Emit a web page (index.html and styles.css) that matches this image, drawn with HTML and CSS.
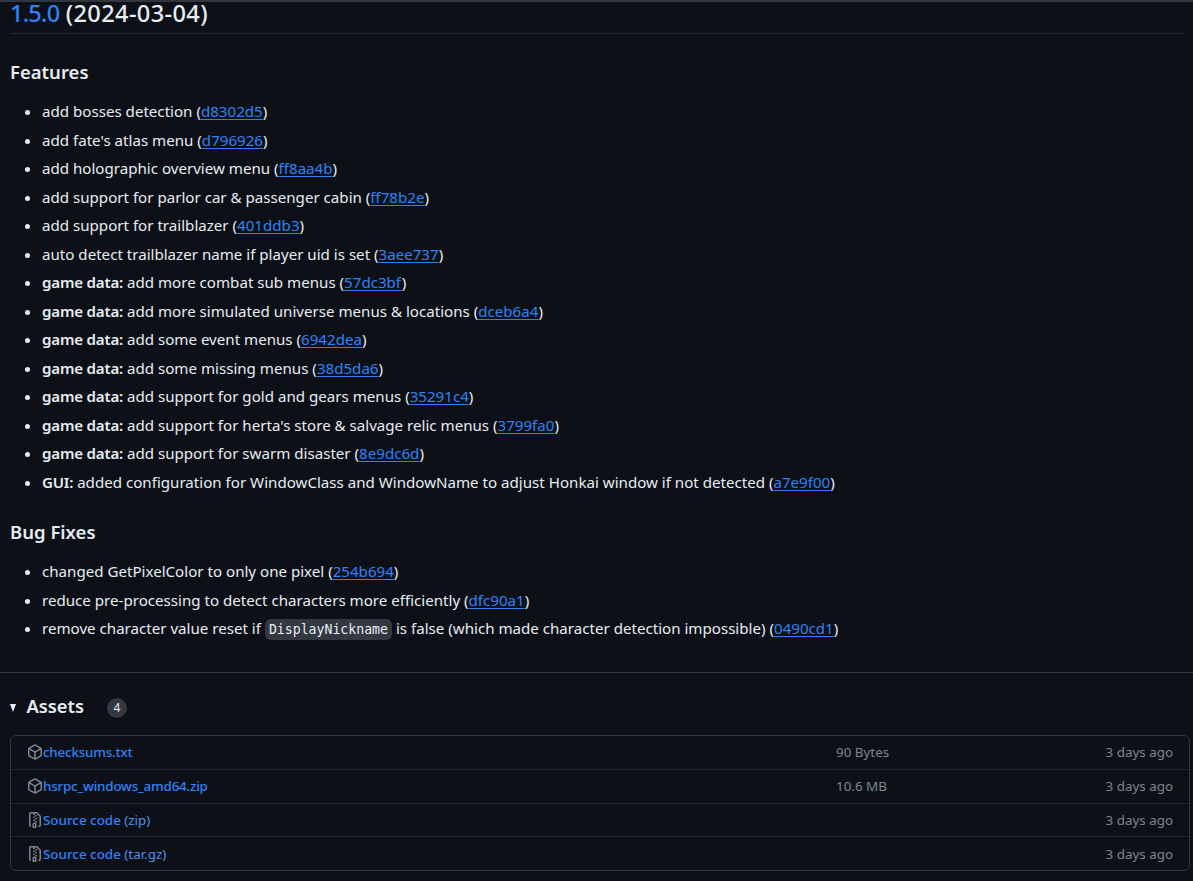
FILE: index.html
```html
<!DOCTYPE html>
<html lang="en">
<head>
<meta charset="utf-8">
<title>1.5.0 release</title>
<link rel="stylesheet" href="styles.css">
</head>
<body>
<div class="topline"></div>
<main class="release">
  <h2 class="version"><a href="#">1.5.0</a> (2024-03-04)</h2>
  <h3 class="section first">Features</h3>
  <ul class="changes">
    <li>add bosses detection (<a href="#">d8302d5</a>)</li>
    <li>add fate's atlas menu (<a href="#">d796926</a>)</li>
    <li>add holographic overview menu (<a href="#">ff8aa4b</a>)</li>
    <li>add support for parlor car &amp; passenger cabin (<a href="#">ff78b2e</a>)</li>
    <li>add support for trailblazer (<a href="#">401ddb3</a>)</li>
    <li>auto detect trailblazer name if player uid is set (<a href="#">3aee737</a>)</li>
    <li><strong>game data:</strong> add more combat sub menus (<a href="#">57dc3bf</a>)</li>
    <li><strong>game data:</strong> add more simulated universe menus &amp; locations (<a href="#">dceb6a4</a>)</li>
    <li><strong>game data:</strong> add some event menus (<a href="#">6942dea</a>)</li>
    <li><strong>game data:</strong> add some missing menus (<a href="#">38d5da6</a>)</li>
    <li><strong>game data:</strong> add support for gold and gears menus (<a href="#">35291c4</a>)</li>
    <li><strong>game data:</strong> add support for herta's store &amp; salvage relic menus (<a href="#">3799fa0</a>)</li>
    <li><strong>game data:</strong> add support for swarm disaster (<a href="#">8e9dc6d</a>)</li>
    <li><strong>GUI:</strong> added configuration for WindowClass and WindowName to adjust Honkai window if not detected (<a href="#">a7e9f00</a>)</li>
  </ul>
  <h3 class="section">Bug Fixes</h3>
  <ul class="changes">
    <li>changed GetPixelColor to only one pixel (<a href="#">254b694</a>)</li>
    <li>reduce pre-processing to detect characters more efficiently (<a href="#">dfc90a1</a>)</li>
    <li>remove character value reset if <code>DisplayNickname</code> is false (which made character detection impossible) (<a href="#">0490cd1</a>)</li>
  </ul>
</main>
<section class="assets">
  <div class="assets-head">
    <span class="caret"></span>
    <h3 class="assets-title">Assets</h3>
    <span class="counter">4</span>
  </div>
  <ul class="asset-list">
    <li class="asset">
      <span class="asset-name"><svg class="icon" viewBox="0 0 16 16"><path d="m8.878.392 5.25 3.045c.54.314.872.89.872 1.514v6.098a1.75 1.75 0 0 1-.872 1.514l-5.25 3.045a1.75 1.75 0 0 1-1.756 0l-5.25-3.045A1.75 1.75 0 0 1 1 11.049V4.951c0-.624.332-1.201.872-1.514L7.122.392a1.75 1.75 0 0 1 1.756 0ZM7.875 1.69l-4.63 2.685L8 7.133l4.755-2.758-4.63-2.685a.248.248 0 0 0-.25 0ZM2.5 5.677v5.372c0 .09.047.171.125.216l4.625 2.683V8.432Zm6.25 8.271 4.625-2.683a.25.25 0 0 0 .125-.216V5.677L8.75 8.432Z"/></svg><a class="file" href="#">checksums.txt</a></span>
      <span class="asset-size">90 Bytes</span>
      <span class="asset-date">3 days ago</span>
    </li>
    <li class="asset">
      <span class="asset-name"><svg class="icon" viewBox="0 0 16 16"><path d="m8.878.392 5.25 3.045c.54.314.872.89.872 1.514v6.098a1.75 1.75 0 0 1-.872 1.514l-5.25 3.045a1.75 1.75 0 0 1-1.756 0l-5.25-3.045A1.75 1.75 0 0 1 1 11.049V4.951c0-.624.332-1.201.872-1.514L7.122.392a1.75 1.75 0 0 1 1.756 0ZM7.875 1.69l-4.63 2.685L8 7.133l4.755-2.758-4.63-2.685a.248.248 0 0 0-.25 0ZM2.5 5.677v5.372c0 .09.047.171.125.216l4.625 2.683V8.432Zm6.25 8.271 4.625-2.683a.25.25 0 0 0 .125-.216V5.677L8.75 8.432Z"/></svg><a class="file" href="#">hsrpc_windows_amd64.zip</a></span>
      <span class="asset-size">10.6 MB</span>
      <span class="asset-date">3 days ago</span>
    </li>
    <li class="asset">
      <span class="asset-name"><svg class="icon" viewBox="0 0 16 16"><path d="M3.5 1.75v11.5c0 .09.048.173.126.217a.75.75 0 0 1-.752 1.298A1.748 1.748 0 0 1 2 13.25V1.75C2 .784 2.784 0 3.75 0h5.586c.464 0 .909.185 1.237.513l2.914 2.914c.329.328.513.773.513 1.237v8.586A1.75 1.75 0 0 1 12.25 15h-.5a.75.75 0 0 1 0-1.5h.5a.25.25 0 0 0 .25-.25V4.664a.25.25 0 0 0-.073-.177L9.513 1.573a.25.25 0 0 0-.177-.073H7.25a.75.75 0 0 1 0 1.5h-.5a.75.75 0 0 1 0-1.5h-3a.25.25 0 0 0-.25.25Zm3.75 8.75h.5c.966 0 1.75.784 1.75 1.75v3a.75.75 0 0 1-.75.75h-2.5a.75.75 0 0 1-.75-.75v-3c0-.966.784-1.75 1.75-1.75ZM6 5.25a.75.75 0 0 1 .75-.75h.5a.75.75 0 0 1 0 1.5h-.5A.75.75 0 0 1 6 5.25Zm.75 2.25h.5a.75.75 0 0 1 0 1.5h-.5a.75.75 0 0 1 0-1.5ZM8 6.75A.75.75 0 0 1 8.75 6h.5a.75.75 0 0 1 0 1.5h-.5A.75.75 0 0 1 8 6.75ZM8.75 3h.5a.75.75 0 0 1 0 1.5h-.5a.75.75 0 0 1 0-1.5ZM8 9.75A.75.75 0 0 1 8.75 9h.5a.75.75 0 0 1 0 1.5h-.5A.75.75 0 0 1 8 9.75Zm-1 2.5v2.25h1v-2.25a.25.25 0 0 0-.25-.25h-.5a.25.25 0 0 0-.25.25Z"/></svg><a href="#">Source code <span class="ext">(zip)</span></a></span>
      <span class="asset-size"></span>
      <span class="asset-date">3 days ago</span>
    </li>
    <li class="asset">
      <span class="asset-name"><svg class="icon" viewBox="0 0 16 16"><path d="M3.5 1.75v11.5c0 .09.048.173.126.217a.75.75 0 0 1-.752 1.298A1.748 1.748 0 0 1 2 13.25V1.75C2 .784 2.784 0 3.75 0h5.586c.464 0 .909.185 1.237.513l2.914 2.914c.329.328.513.773.513 1.237v8.586A1.75 1.75 0 0 1 12.25 15h-.5a.75.75 0 0 1 0-1.5h.5a.25.25 0 0 0 .25-.25V4.664a.25.25 0 0 0-.073-.177L9.513 1.573a.25.25 0 0 0-.177-.073H7.25a.75.75 0 0 1 0 1.5h-.5a.75.75 0 0 1 0-1.5h-3a.25.25 0 0 0-.25.25Zm3.75 8.75h.5c.966 0 1.75.784 1.75 1.75v3a.75.75 0 0 1-.75.75h-2.5a.75.75 0 0 1-.75-.75v-3c0-.966.784-1.75 1.75-1.75ZM6 5.25a.75.75 0 0 1 .75-.75h.5a.75.75 0 0 1 0 1.5h-.5A.75.75 0 0 1 6 5.25Zm.75 2.25h.5a.75.75 0 0 1 0 1.5h-.5a.75.75 0 0 1 0-1.5ZM8 6.75A.75.75 0 0 1 8.75 6h.5a.75.75 0 0 1 0 1.5h-.5A.75.75 0 0 1 8 6.75ZM8.75 3h.5a.75.75 0 0 1 0 1.5h-.5a.75.75 0 0 1 0-1.5ZM8 9.75A.75.75 0 0 1 8.75 9h.5a.75.75 0 0 1 0 1.5h-.5A.75.75 0 0 1 8 9.75Zm-1 2.5v2.25h1v-2.25a.25.25 0 0 0-.25-.25h-.5a.25.25 0 0 0-.25.25Z"/></svg><a href="#">Source code <span class="ext">(tar.gz)</span></a></span>
      <span class="asset-size"></span>
      <span class="asset-date">3 days ago</span>
    </li>
  </ul>
</section>
</body>
</html>
```
FILE: styles.css
```css
html, body {
  margin: 0;
  padding: 0;
  height: 881px;
  overflow: hidden;
  background: #0d1117;
}
body {
  color: #e6edf3;
  font-family: "Noto Sans", sans-serif;
  font-size: 15.12px;
}
a {
  color: #2f81f7;
  text-decoration: none;
}
.topline {
  height: 2px;
  background: #30363d;
}
.release {
  padding: 0 10px;
  height: 670px;
  border-bottom: 1px solid #30363d;
}
.version {
  margin: 0;
  height: 31px;
  line-height: 22px;
  font-size: 23.6px;
  font-weight: 500;
  letter-spacing: 0.35px;
  border-bottom: 1px solid #21262d;
}
.version a {
  letter-spacing: -0.8px;
}
.section {
  margin: 23px 0 12px;
  height: 30px;
  line-height: 30px;
  font-size: 18.5px;
  font-weight: 600;
}
.changes {
  margin: 0;
  padding: 0 0 0 32px;
}
.changes li {
  height: 24.5px;
  line-height: 24.5px;
  margin-bottom: 4.04px;
}
.changes a {
  text-decoration: underline;
  text-underline-offset: 2px;
}
strong {
  font-weight: 600;
  letter-spacing: -0.2px;
}
code {
  font-family: "DejaVu Sans Mono", monospace;
  font-size: 13.2px;
  padding: 3px 4px;
  background: #343941;
  border-radius: 6px;
}
.assets {
  padding: 0 3px 0 10px;
}
.assets-head {
  display: flex;
  align-items: center;
  height: 60px;
  padding-top: 2px;
}
.caret {
  width: 0;
  height: 0;
  border-left: 3.5px solid transparent;
  border-right: 3.5px solid transparent;
  border-top: 8px solid #e6edf3;
  margin: 6px 10.5px 0 0;
}
.assets-title {
  margin: 0;
  font-size: 18.3px;
  font-weight: 600;
}
.counter {
  margin: 6px 0 0 23px;
  width: 20px;
  height: 20px;
  line-height: 20px;
  text-align: center;
  border-radius: 50%;
  background: #343941;
  font-size: 12px;
}
.asset-list {
  list-style: none;
  margin: 0;
  padding: 0;
  border: 1px solid #30363d;
  border-radius: 6px;
}
.asset {
  display: grid;
  grid-template-columns: 809px 1fr auto;
  align-items: center;
  height: 32.75px;
  padding: 0 16px;
  font-size: 13.4px;
  color: #7d8590;
}
.asset + .asset {
  border-top: 1px solid #21262d;
}
.asset-name {
  display: flex;
  align-items: center;
}
.asset-name a {
  font-weight: 500;
}
.asset-name .file {
  letter-spacing: -0.2px;
}
.ext {
  font-weight: 400;
  color: #4f8fe8;
}
.icon {
  width: 16px;
  height: 16px;
  fill: #7d8590;
}
```
